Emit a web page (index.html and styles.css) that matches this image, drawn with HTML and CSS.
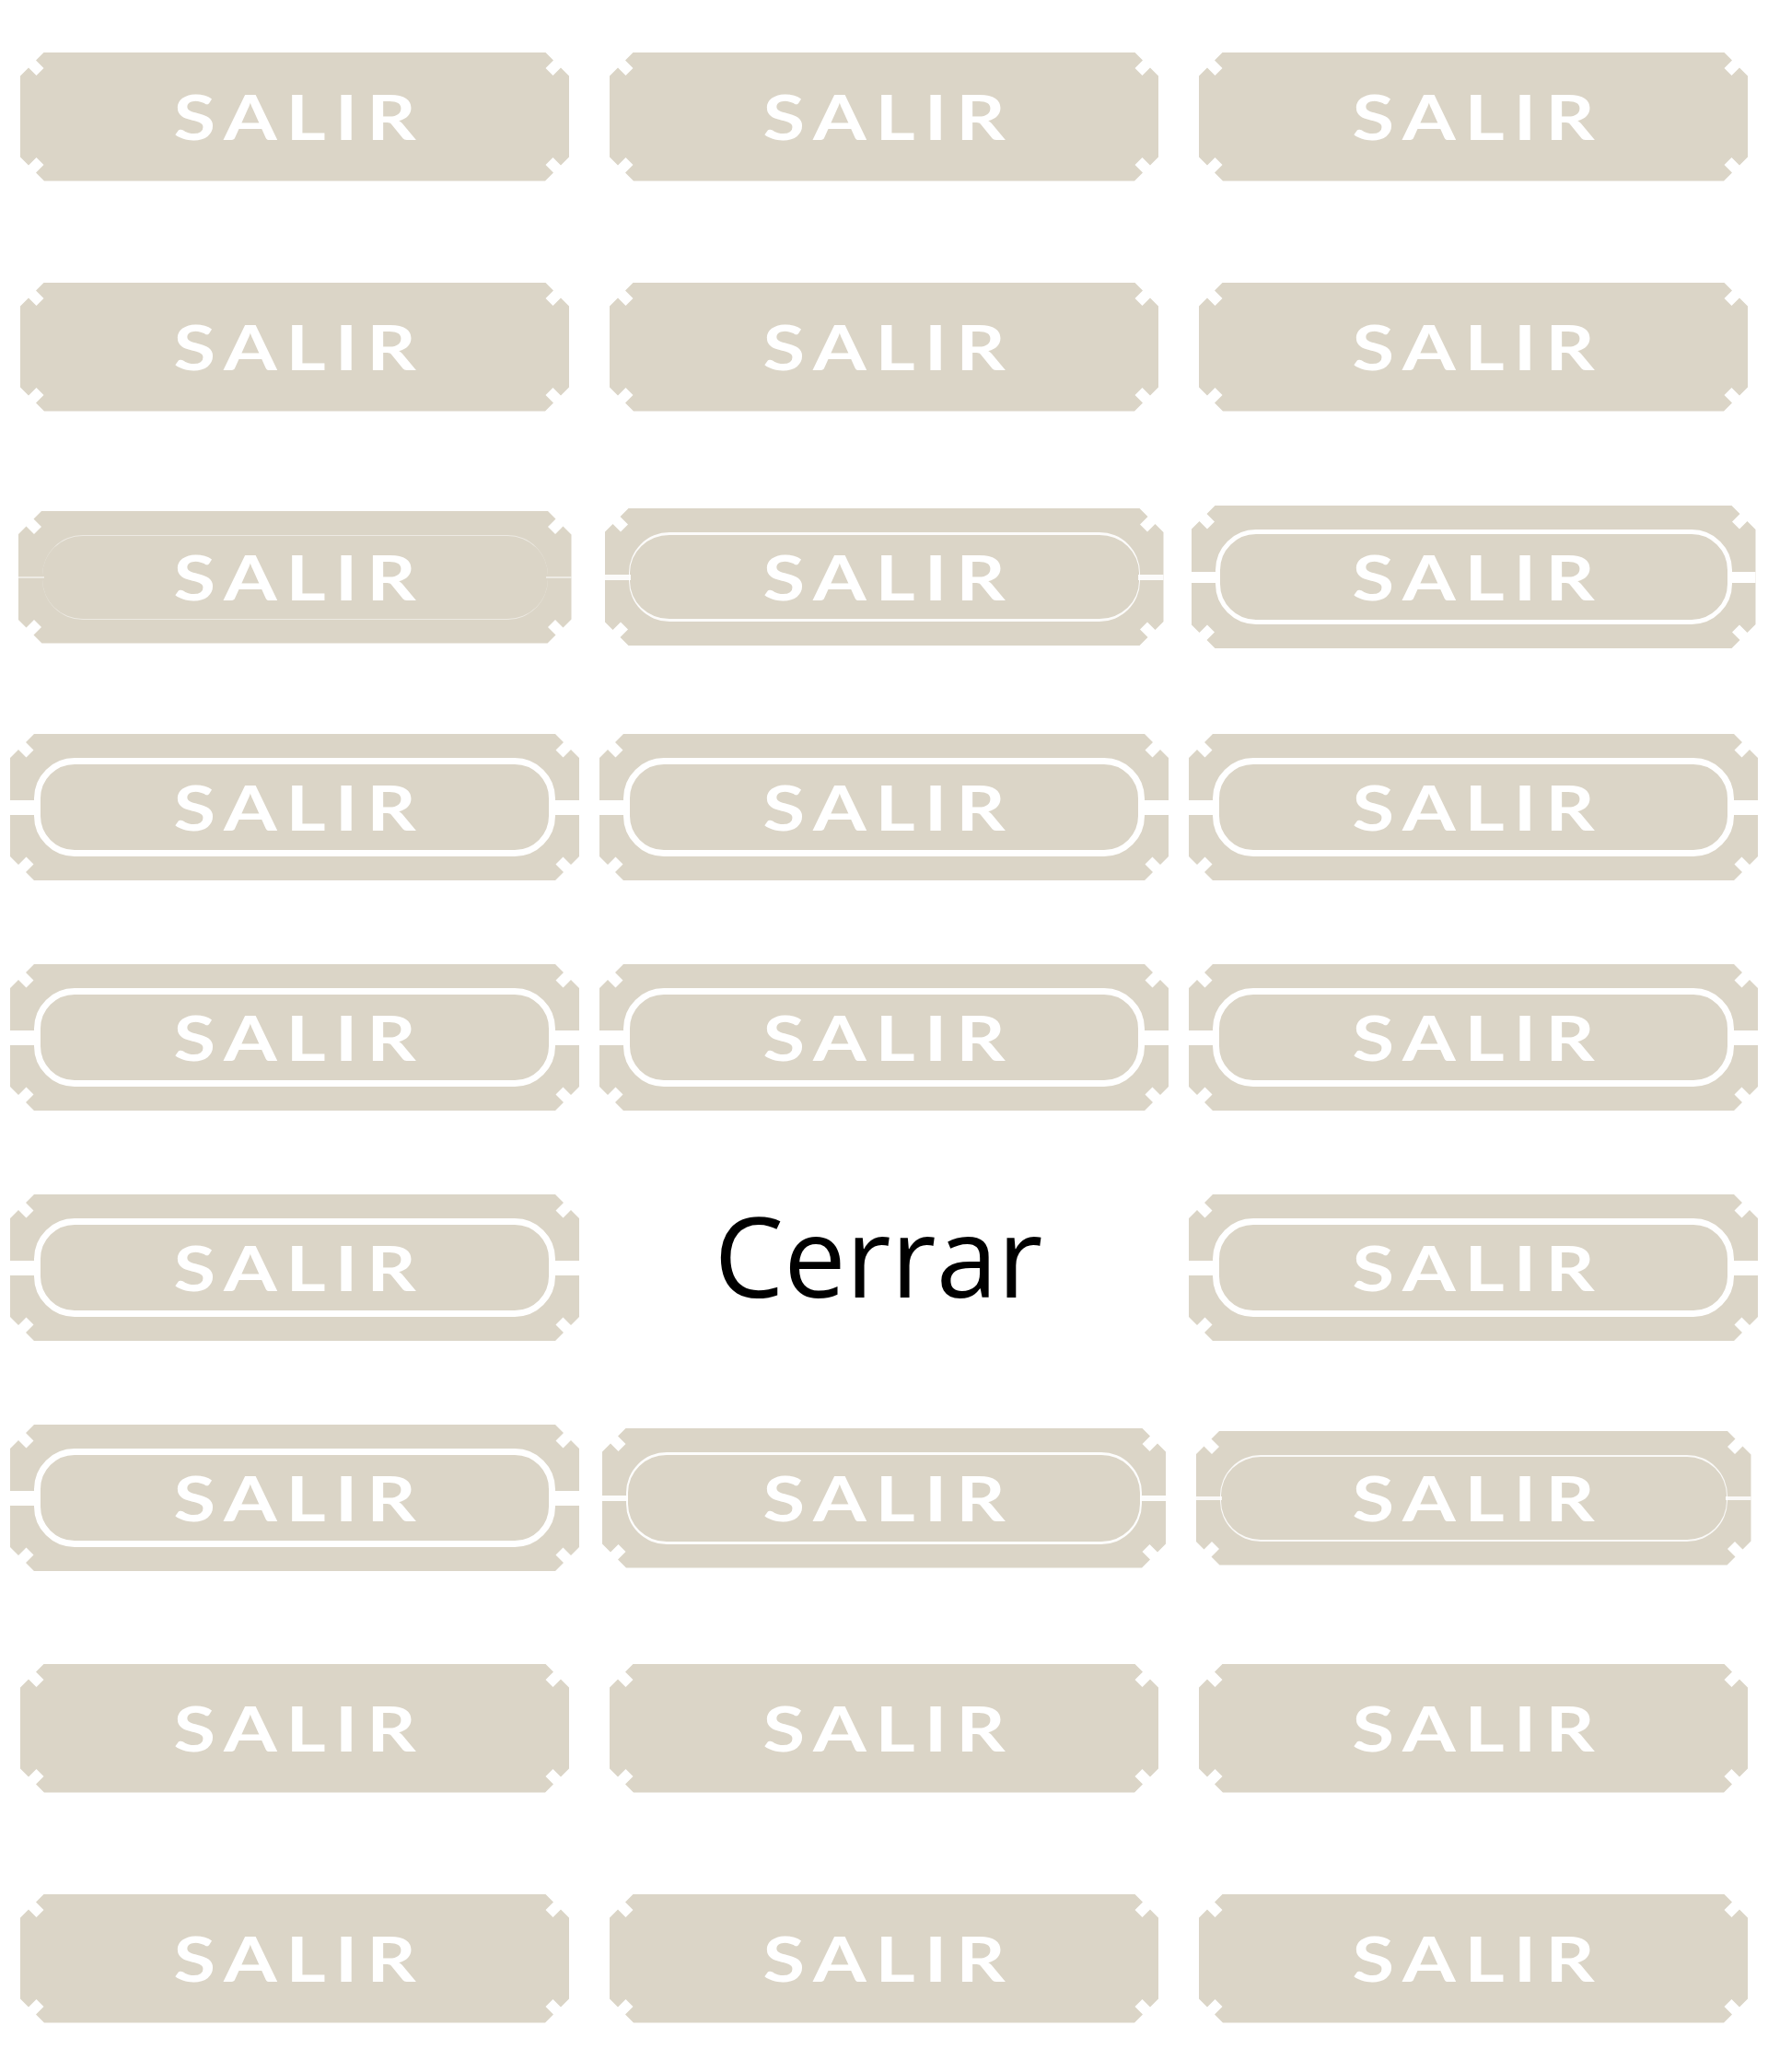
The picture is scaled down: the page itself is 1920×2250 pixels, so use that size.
FILE: index.html
```html
<!DOCTYPE html>
<html lang="es">
<head>
<meta charset="utf-8">
<title>Salir</title>
<link rel="stylesheet" href="styles.css">
</head>
<body>
<main class="sheet">
  <div class="cell"><div class="btn st0"><span class="label">SALIR</span></div></div>
  <div class="cell"><div class="btn st0"><span class="label">SALIR</span></div></div>
  <div class="cell"><div class="btn st0"><span class="label">SALIR</span></div></div>

  <div class="cell"><div class="btn st0"><span class="label">SALIR</span></div></div>
  <div class="cell"><div class="btn st0"><span class="label">SALIR</span></div></div>
  <div class="cell"><div class="btn st0"><span class="label">SALIR</span></div></div>

  <div class="cell"><div class="btn st1"><i class="ring"></i><i class="band band-l"></i><i class="band band-r"></i><span class="label">SALIR</span></div></div>
  <div class="cell"><div class="btn st2"><i class="ring"></i><i class="band band-l"></i><i class="band band-r"></i><span class="label">SALIR</span></div></div>
  <div class="cell"><div class="btn st3"><i class="ring"></i><i class="band band-l"></i><i class="band band-r"></i><span class="label">SALIR</span></div></div>

  <div class="cell"><div class="btn full"><i class="ring"></i><i class="band band-l"></i><i class="band band-r"></i><span class="label">SALIR</span></div></div>
  <div class="cell"><div class="btn full"><i class="ring"></i><i class="band band-l"></i><i class="band band-r"></i><span class="label">SALIR</span></div></div>
  <div class="cell"><div class="btn full"><i class="ring"></i><i class="band band-l"></i><i class="band band-r"></i><span class="label">SALIR</span></div></div>

  <div class="cell"><div class="btn full"><i class="ring"></i><i class="band band-l"></i><i class="band band-r"></i><span class="label">SALIR</span></div></div>
  <div class="cell"><div class="btn full"><i class="ring"></i><i class="band band-l"></i><i class="band band-r"></i><span class="label">SALIR</span></div></div>
  <div class="cell"><div class="btn full"><i class="ring"></i><i class="band band-l"></i><i class="band band-r"></i><span class="label">SALIR</span></div></div>

  <div class="cell"><div class="btn full"><i class="ring"></i><i class="band band-l"></i><i class="band band-r"></i><span class="label">SALIR</span></div></div>
  <div class="cell"><span class="alt">Cerrar</span></div>
  <div class="cell"><div class="btn full"><i class="ring"></i><i class="band band-l"></i><i class="band band-r"></i><span class="label">SALIR</span></div></div>

  <div class="cell"><div class="btn full"><i class="ring"></i><i class="band band-l"></i><i class="band band-r"></i><span class="label">SALIR</span></div></div>
  <div class="cell"><div class="btn r2"><i class="ring"></i><i class="band band-l"></i><i class="band band-r"></i><span class="label">SALIR</span></div></div>
  <div class="cell"><div class="btn r1"><i class="ring"></i><i class="band band-l"></i><i class="band band-r"></i><span class="label">SALIR</span></div></div>

  <div class="cell"><div class="btn st0"><span class="label">SALIR</span></div></div>
  <div class="cell"><div class="btn st0"><span class="label">SALIR</span></div></div>
  <div class="cell"><div class="btn st0"><span class="label">SALIR</span></div></div>

  <div class="cell"><div class="btn st0"><span class="label">SALIR</span></div></div>
  <div class="cell"><div class="btn st0"><span class="label">SALIR</span></div></div>
  <div class="cell"><div class="btn st0"><span class="label">SALIR</span></div></div>
</main>
</body>
</html>
```

FILE: styles.css
```css
html, body {
  margin: 0;
  padding: 0;
  background: #ffffff;
}

.sheet {
  display: grid;
  grid-template-columns: repeat(3, 640px);
  grid-auto-rows: 250px;
  width: 1920px;
}

.cell {
  display: flex;
  align-items: center;
  justify-content: center;
  padding-top: 3px;
  box-sizing: border-box;
}

.btn {
  --w: 596px;
  --h: 140px;
  --ring-tb: 0px;
  --ring-lr: 0px;
  --ring-o: 0;
  --band: 0px;
  position: relative;
  width: var(--w);
  height: var(--h);
  flex: none;
  background: #dbd5c7;
  display: flex;
  align-items: center;
  justify-content: center;
  clip-path: polygon(
    26px 0, calc(100% - 26px) 0,
    calc(100% - 17px) 9px, calc(100% - 25.5px) 17.5px, calc(100% - 17.5px) 25.5px, calc(100% - 9px) 17px,
    100% 26px, 100% calc(100% - 26px),
    calc(100% - 9px) calc(100% - 17px), calc(100% - 17.5px) calc(100% - 25.5px), calc(100% - 25.5px) calc(100% - 17.5px), calc(100% - 17px) calc(100% - 9px),
    calc(100% - 26px) 100%, 26px 100%,
    17px calc(100% - 9px), 25.5px calc(100% - 17.5px), 17.5px calc(100% - 25.5px), 9px calc(100% - 17px),
    0 calc(100% - 26px), 0 26px,
    9px 17px, 17.5px 25.5px, 25.5px 17.5px, 17px 9px
  );
}

.st1 { --w: 601px; --h: 144px; --ring-tb: 1.5px; --ring-lr: 0px; --ring-o: 0.5; --band: 2px; }
.st2 { --w: 607px; --h: 149px; --ring-tb: 3px; --ring-lr: 1.5px; --ring-o: 0.9; --band: 6px; }
.st3 { --w: 613px; --h: 155px; --ring-tb: 5px; --ring-lr: 5px; --ring-o: 1; --band: 12px; }
.full { --w: 618px; --h: 159px; --ring-tb: 7.5px; --ring-lr: 7.5px; --ring-o: 1; --band: 16px; }
.r2 { --w: 612px; --h: 152px; --ring-tb: 3px; --ring-lr: 2px; --ring-o: 0.95; --band: 6px; }
.r1 { --w: 603px; --h: 146px; --ring-tb: 2px; --ring-lr: 0.5px; --ring-o: 0.85; --band: 4px; }

.ring {
  position: absolute;
  inset: 26px;
  border-style: solid;
  border-color: rgba(255, 255, 255, var(--ring-o));
  border-width: var(--ring-tb) var(--ring-lr);
  border-radius: 44px;
}

.band {
  position: absolute;
  top: calc(50% - var(--band) / 2);
  height: var(--band);
  width: 28px;
  background: rgba(255, 255, 255, var(--ring-o));
}
.band-l { left: 0; }
.band-r { right: 0; }

.label {
  position: relative;
  font-family: "Lato", sans-serif;
  font-weight: 700;
  font-size: 67px;
  line-height: 1;
  color: #ffffff;
  letter-spacing: 0.12em;
  padding-left: 0.12em;
  transform: scaleX(1.24);
}

.alt {
  font-family: "Open Sans", "Noto Sans", sans-serif;
  font-size: 120px;
  line-height: 1;
  color: #000000;
  padding-bottom: 28px;
  padding-right: 12px;
}
```
